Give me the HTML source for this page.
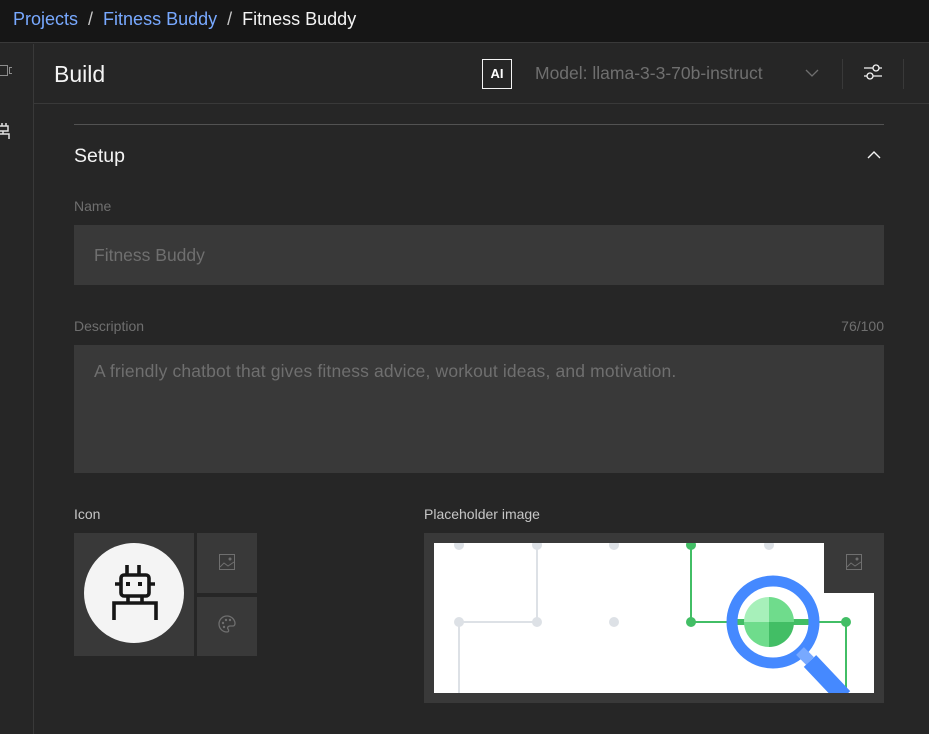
<!DOCTYPE html>
<html><head><meta charset="utf-8"><style>
*{margin:0;padding:0;box-sizing:border-box}
body{width:929px;height:734px;overflow:hidden;background:#262626;font-family:"Liberation Sans",sans-serif;position:relative}
.a{position:absolute}
</style></head><body>
<div class="a" style="left:0;top:0;width:929px;height:43px;background:#161616;border-bottom:1px solid #393939"></div>
<div class="a" style="left:13px;top:9px;font-size:18px;color:#78a9ff;white-space:nowrap">Projects <span style="color:#c6c6c6">&nbsp;/&nbsp;</span> Fitness Buddy <span style="color:#c6c6c6">&nbsp;/&nbsp;</span> <span style="color:#f4f4f4">Fitness Buddy</span></div>
<div class="a" style="left:33px;top:44px;width:1px;height:690px;background:#393939"></div>
<div class="a" style="left:0;top:65px;width:8px;height:11px;border:1px solid #8d8d8d;border-left:none"></div>
<div class="a" style="left:9px;top:67px;width:3px;height:7px;border:1px solid #8d8d8d;border-right:none"></div>
<svg class="a" style="left:0;top:122px" width="12" height="18" viewBox="0 0 12 18"><path d="M2 1v3M6 1v3M0 4h8v5H0M3 9v3M0 12h9v5" stroke="#e0e0e0" stroke-width="1.5" fill="none"/></svg>
<div class="a" style="left:34px;top:103px;width:895px;height:1px;background:#393939"></div>
<div class="a" style="left:54px;top:61px;font-size:23px;color:#f4f4f4">Build</div>
<div class="a" style="left:482px;top:59px;width:30px;height:30px;border:1px solid #f4f4f4;color:#fff;font-weight:bold;font-size:13px;text-align:center;line-height:28px">AI</div>
<div class="a" style="left:535px;top:63px;font-size:17.5px;color:#6f6f6f;white-space:nowrap">Model: llama-3-3-70b-instruct</div>
<svg class="a" style="left:805px;top:69px" width="14" height="9"><path d="M1 1l6 6 6-6" stroke="#6f6f6f" stroke-width="1.3" fill="none"/></svg>
<div class="a" style="left:842px;top:59px;width:1px;height:30px;background:#393939"></div>
<div class="a" style="left:903px;top:59px;width:1px;height:30px;background:#393939"></div>
<svg class="a" style="left:863px;top:63px" width="20" height="18"><path d="M1 5h18M1 13h18" stroke="#f4f4f4" stroke-width="1.3"/><circle cx="13" cy="5" r="3" fill="#262626" stroke="#f4f4f4" stroke-width="1.3"/><circle cx="7" cy="13" r="3" fill="#262626" stroke="#f4f4f4" stroke-width="1.3"/></svg>
<div class="a" style="left:74px;top:124px;width:810px;height:1px;background:#525252"></div>
<div class="a" style="left:74px;top:145px;font-size:19.5px;color:#f4f4f4">Setup</div>
<svg class="a" style="left:867px;top:150px" width="14" height="9"><path d="M1 8l6-6 6 6" stroke="#f4f4f4" stroke-width="1.4" fill="none"/></svg>
<div class="a" style="left:74px;top:198px;font-size:14px;color:#6f6f6f">Name</div>
<div class="a" style="left:74px;top:225px;width:810px;height:60px;background:#393939"></div>
<div class="a" style="left:94px;top:245px;font-size:17.5px;color:#6f6f6f">Fitness Buddy</div>
<div class="a" style="left:74px;top:318px;font-size:14px;color:#6f6f6f">Description</div>
<div class="a" style="left:820px;top:318px;width:64px;text-align:right;font-size:14px;color:#6f6f6f">76/100</div>
<div class="a" style="left:74px;top:345px;width:810px;height:128px;background:#393939"></div>
<div class="a" style="left:94px;top:361px;font-size:17.5px;color:#6f6f6f;white-space:nowrap;letter-spacing:0.15px">A friendly chatbot that gives fitness advice, workout ideas, and motivation.</div>
<div class="a" style="left:74px;top:506px;font-size:14px;color:#c6c6c6">Icon</div>
<div class="a" style="left:424px;top:506px;font-size:14px;color:#c6c6c6">Placeholder image</div>
<div class="a" style="left:74px;top:533px;width:120px;height:123px;background:#393939"></div>
<div class="a" style="left:84px;top:543px;width:100px;height:100px;border-radius:50%;background:#f4f4f4"></div>
<svg class="a" style="left:84px;top:543px" width="100" height="100" viewBox="0 0 100 100"><g stroke="#161616" stroke-width="3.6" fill="none" stroke-linecap="butt"><path d="M43 22v10M55 22v10"/><rect x="37" y="32" width="28" height="21" rx="3"/><path d="M31 41h6M65 41h6M44 53v6M58 53v6M30 77V60h42v17"/></g><rect x="42" y="39" width="4" height="4" fill="#161616"/><rect x="54" y="39" width="4" height="4" fill="#161616"/></svg>
<div class="a" style="left:197px;top:533px;width:60px;height:60px;background:#393939"></div>
<div class="a" style="left:197px;top:597px;width:60px;height:59px;background:#393939"></div>
<svg class="a" style="left:219px;top:554px" width="16" height="16"><rect x="0.5" y="0.5" width="15" height="15" fill="none" stroke="#6f6f6f"/><path d="M1 13l4-4 4 3 6-4" stroke="#6f6f6f" fill="none"/><circle cx="11" cy="5" r="1.5" fill="#6f6f6f"/></svg>
<svg class="a" style="left:218px;top:615px" width="18" height="18"><path d="M9 1a8 8 0 1 0 0 16c2 0 2-2 1-3s0-3 2-3h3c2 0 2-2 2-3A8 8 0 0 0 9 1z" stroke="#6f6f6f" fill="none" stroke-width="1.3"/><circle cx="5" cy="8" r="1.2" fill="#6f6f6f"/><circle cx="8" cy="5" r="1.2" fill="#6f6f6f"/><circle cx="12" cy="5" r="1.2" fill="#6f6f6f"/><circle cx="6" cy="12" r="1.2" fill="#6f6f6f"/></svg>
<div class="a" style="left:424px;top:533px;width:460px;height:170px;background:#393939"></div>
<svg class="a" style="left:434px;top:543px" width="440" height="150" viewBox="0 0 440 150">
<rect width="440" height="150" fill="#fff"/>
<g stroke="#dde1e6" stroke-width="2" fill="none"><path d="M103 0v79H25v71"/></g>
<g fill="#dde1e6"><circle cx="25" cy="2" r="5"/><circle cx="103" cy="2" r="5"/><circle cx="180" cy="2" r="5"/><circle cx="335" cy="2" r="5"/><circle cx="25" cy="79" r="5"/><circle cx="103" cy="79" r="5"/><circle cx="180" cy="79" r="5"/></g>
<g stroke="#42be65" stroke-width="2" fill="none"><path d="M257 0v79h155v71"/></g>
<g fill="#42be65"><circle cx="257" cy="2" r="5"/><circle cx="257" cy="79" r="5"/><circle cx="412" cy="79" r="5"/></g>
<rect x="300" y="76" width="80" height="6" fill="#42be65"/>
<path d="M335 79 V54 A25 25 0 0 0 310 79z" fill="#a7f0ba"/>
<path d="M335 79 V54 A25 25 0 0 1 360 79z" fill="#6fdc8c"/>
<path d="M335 79 H310 A25 25 0 0 0 335 104z" fill="#6fdc8c"/>
<path d="M335 79 H360 A25 25 0 0 1 335 104z" fill="#42be65"/>
<circle cx="339" cy="79" r="41" fill="none" stroke="#4589ff" stroke-width="11"/>
<path d="M366 108l10 10" stroke="#78a9ff" stroke-width="11"/>
<path d="M376 118l34 36" stroke="#4589ff" stroke-width="17"/>
<rect x="390" y="0" width="50" height="50" fill="#393939"/>
</svg>
<svg class="a" style="left:846px;top:554px" width="16" height="16"><rect x="0.5" y="0.5" width="15" height="15" fill="none" stroke="#6f6f6f"/><path d="M1 13l4-4 4 3 6-4" stroke="#6f6f6f" fill="none"/><circle cx="11" cy="5" r="1.5" fill="#6f6f6f"/></svg>
</body></html>
